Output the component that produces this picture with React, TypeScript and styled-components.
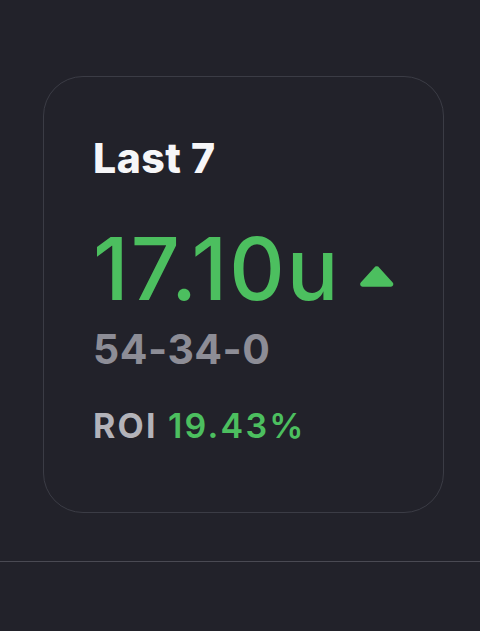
import React from 'react';
import styled, { createGlobalStyle } from 'styled-components';

const GlobalStyle = createGlobalStyle`
    html, body {
        margin: 0;
        padding: 0;
        background: #22222a;
    }
    body {
        font-family: 'Inter', 'Liberation Sans', sans-serif;
        -webkit-font-smoothing: antialiased;
    }
`;

const Page = styled.main`
    min-height: 631px;
    background: #22222a;
    display: flex;
    flex-direction: column;
    padding-top: 76px;
    box-sizing: border-box;
`;

const CardWrap = styled.div`
    padding-left: 43px;
`;

const Card = styled.section`
    width: 401px;
    height: 437px;
    box-sizing: border-box;
    border: 1px solid #3b3c45;
    border-radius: 40px;
    padding: 56px 49px 0;
    display: flex;
    flex-direction: column;
`;

const Title = styled.h2`
    margin: 0;
    font-family: 'Inter', sans-serif;
    font-weight: 800;
    font-size: 41px;
    line-height: 50px;
    letter-spacing: 0.5px;
    color: #f6f6f8;
`;

const UnitsRow = styled.div`
    display: flex;
    align-items: center;
    gap: 18px;
    margin-top: 41px;
`;

const Units = styled.span`
    font-weight: 500;
    font-size: 86px;
    line-height: 90px;
    letter-spacing: 2px;
    color: #4cbf5f;
`;

const Trend = styled.svg`
    width: 36px;
    height: 22px;
    margin-top: 14px;
`;

const Record = styled.div`
    font-weight: 700;
    font-size: 41px;
    line-height: 46px;
    letter-spacing: 0.5px;
    color: #8d8d96;
    margin-top: 12px;
`;

const Roi = styled.div`
    margin-top: 34px;
    font-size: 34px;
    line-height: 40px;
    font-weight: 700;
    letter-spacing: 2.2px;
    color: #b3b3b9;
`;

const RoiValue = styled.span<{ $positive: boolean }>`
    font-weight: 600;
    color: ${(p) => (p.$positive ? '#4cbf5f' : '#e5534b')};
`;

const Divider = styled.hr`
    margin: 48px 0 0;
    border: 0;
    border-top: 1px solid #4a4a53;
`;

const TrendUp: React.FC = () => (
    <Trend viewBox="0 0 36 22">
        <path
            d="M15.4 2.6a3 3 0 0 1 5.2 0l13.6 15a2.5 2.5 0 0 1-1.9 4.2H3.7a2.5 2.5 0 0 1-1.9-4.2z"
            fill="#4cbf5f"
        />
    </Trend>
);

const App: React.FC = () => {
    const stats = { label: 'Last 7', units: '17.10u', record: '54-34-0', roi: 19.43 };
    return (
        <Page>
            <GlobalStyle />
            <CardWrap>
                <Card>
                    <Title>{stats.label}</Title>
                    <UnitsRow>
                        <Units>{stats.units}</Units>
                        <TrendUp />
                    </UnitsRow>
                    <Record>{stats.record}</Record>
                    <Roi>
                        ROI{' '}
                        <RoiValue $positive={stats.roi > 0}>
                            {stats.roi.toFixed(2)}%
                        </RoiValue>
                    </Roi>
                </Card>
            </CardWrap>
            <Divider />
        </Page>
    );
};

export default App;
